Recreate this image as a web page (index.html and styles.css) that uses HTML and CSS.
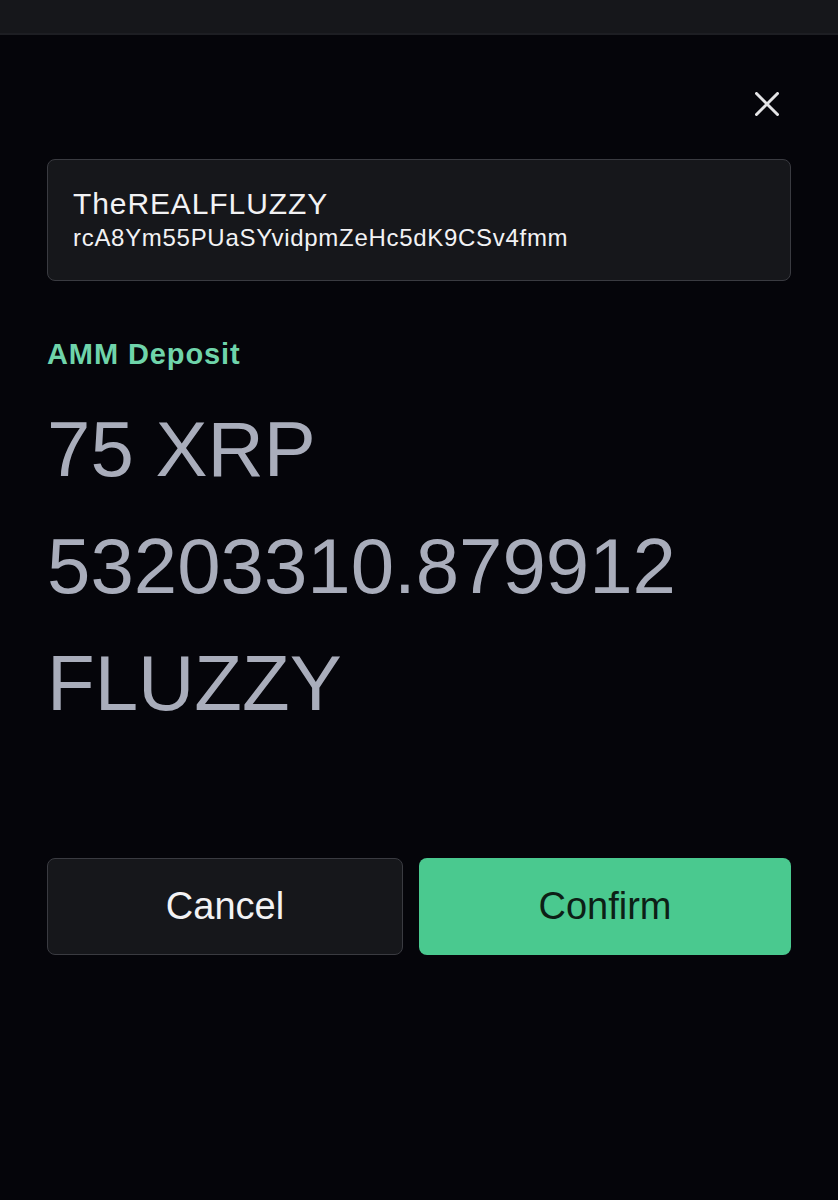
FILE: index.html
```html
<!DOCTYPE html>
<html lang="en">
<head>
<meta charset="utf-8">
<title>AMM Deposit</title>
<link rel="stylesheet" href="styles.css">
</head>
<body>
<div class="topbar"></div>
<main class="sheet">
  <div class="close-row">
    <button class="close" aria-label="Close">
      <svg width="24" height="24" viewBox="0 0 24 24"><path d="M1.5 1.5 L22.5 22.5 M22.5 1.5 L1.5 22.5" stroke="#e4e4e6" stroke-width="3" stroke-linecap="round" fill="none"/></svg>
    </button>
  </div>
  <div class="account">
    <div class="account-name">TheREALFLUZZY</div>
    <div class="account-addr">rcA8Ym55PUaSYvidpmZeHc5dK9CSv4fmm</div>
  </div>
  <div class="tx-type">AMM Deposit</div>
  <div class="amounts">
    <span class="amount">75 XRP</span>
    <span class="amount">53203310.879912</span>
    <span class="amount">FLUZZY</span>
  </div>
  <div class="actions">
    <button class="btn btn-cancel">Cancel</button>
    <button class="btn btn-confirm">Confirm</button>
  </div>
</main>
</body>
</html>
```
FILE: styles.css
```css
html, body {
  margin: 0;
  padding: 0;
  background: #05050a;
  font-family: "Liberation Sans", Arial, sans-serif;
}
.topbar {
  height: 33px;
  background: #16171b;
  border-bottom: 2px solid #1d1e23;
}
.sheet {
  padding: 0 47px;
}
.close-row {
  display: flex;
  justify-content: flex-end;
  padding-top: 57px;
  padding-right: 12px;
}
.close {
  display: block;
  width: 24px;
  height: 24px;
  padding: 0;
  border: 0;
  background: transparent;
}
.close svg { display: block; }
.account {
  margin-top: 43px;
  box-sizing: border-box;
  height: 122px;
  padding: 26px 24px 0 25px;
  background: #16171b;
  border: 1.5px solid #3a3b41;
  border-radius: 8px;
  color: #f2f2f4;
}
.account-name {
  font-size: 30px;
  line-height: 36px;
  letter-spacing: 0.9px;
}
.account-addr {
  font-size: 24px;
  line-height: 32px;
  letter-spacing: 0.7px;
}
.tx-type {
  margin-top: 55px;
  font-size: 29px;
  line-height: 36px;
  font-weight: 700;
  letter-spacing: 0.9px;
  color: #6fd4aa;
}
.amounts {
  margin-top: 19px;
  color: #a9adbb;
  font-size: 78px;
  line-height: 117px;
}
.amount { display: block; }
.actions {
  margin-top: 116px;
  display: grid;
  grid-template-columns: 356fr 372fr;
  gap: 16px;
}
.btn {
  height: 97px;
  border-radius: 8px;
  font-family: "Liberation Sans", Arial, sans-serif;
  font-size: 38px;
  padding: 0;
}
.btn-cancel {
  background: #16171b;
  border: 1.5px solid #3a3b41;
  color: #f2f2f4;
}
.btn-confirm {
  background: #4ac98f;
  border: 0;
  color: #0d1f16;
}
```
